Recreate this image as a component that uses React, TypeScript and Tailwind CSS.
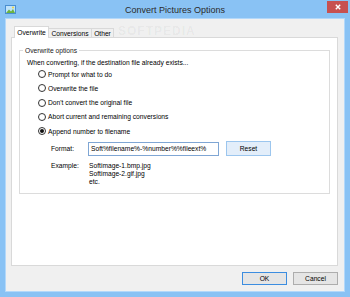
import React from 'react';

const Radio: React.FC<{ checked?: boolean; label: string }> = ({ checked, label }) => (
  <div className="flex items-center h-[14.25px] ml-[11px] gap-[2px]">
    <span className="w-[8px] h-[8px] rounded-full border border-[#333] bg-white flex items-center justify-center">
      {checked && <span className="w-[4px] h-[4px] rounded-full bg-[#111]" />}
    </span>
    <span>{label}</span>
  </div>
);

const App: React.FC = () => {
  return (
    <div
      className="w-[350px] h-[297px] bg-[#89c2f4] flex flex-col text-[6.7px] leading-[9px] text-black overflow-hidden"
      style={{ fontFamily: '"Liberation Sans", Arial, sans-serif' }}
    >
      {/* Title bar */}
      <div className="relative h-[18px] flex items-center justify-center shrink-0">
        <svg className="absolute left-[5px] top-[5px]" width="11" height="9" viewBox="0 0 11 9">
          <rect x="0.5" y="0.5" width="10" height="8" fill="#bfe3fb" stroke="#4a8fd0" />
          <path d="M1 8 L4 4.5 L6 6.5 L8 4 L10 8 Z" fill="#6cb33f" />
          <circle cx="8" cy="2.5" r="1" fill="#f2d33a" />
        </svg>
        <span className="text-[9px] leading-[10px] text-[#2b2b2b] mt-[2px]">Convert Pictures Options</span>
        <div className="absolute right-[2px] top-[1px] w-[21px] h-[12px] bg-[#c75050] flex items-center justify-center">
          <svg width="6" height="6" viewBox="0 0 6 6">
            <path d="M0.8 0.8 L5.2 5.2 M5.2 0.8 L0.8 5.2" stroke="#fff" strokeWidth="1.4" />
          </svg>
        </div>
      </div>

      {/* Client area */}
      <div className="relative flex-1 mx-[5px] mb-[5px] bg-[#f0f0f0] border border-[#b3d8fa] flex flex-col pl-[5px] pr-[6px]">
        <span className="absolute left-[112px] top-[6px] text-[12px] leading-[13px] font-bold tracking-[1px] text-[#000]/[0.05] pointer-events-none">
          SOFTPEDIA
        </span>

        {/* Tabs */}
        <div className="flex items-end mt-[7px] pl-[3px] -mb-px relative z-10 h-[12px]">
          <div className="h-[12px] w-[35px] bg-white border border-[#d9d9d9] border-b-0 flex items-center justify-center">
            Overwrite
          </div>
          <div className="h-[9px] w-[43px] mb-px bg-[#f0f0f0] border border-[#d9d9d9] border-l-0 border-b-0 flex items-center justify-center">
            Conversions
          </div>
          <div className="h-[9px] w-[22px] mb-px bg-[#f0f0f0] border border-[#d9d9d9] border-l-0 border-b-0 flex items-center justify-center">
            Other
          </div>
        </div>

        {/* Tab panel */}
        <div className="h-[229px] bg-white border border-[#d9d9d9] px-[7px] pt-[12px]">
          <div className="relative h-[144px] border border-[#dcdcdc] pl-[7px] pt-[7px]">
            <span className="absolute left-[3px] -top-[5px] bg-white px-[2px] text-[#1a1a1a]">Overwrite options</span>
            <div>When converting, if the destination file already exists...</div>
            <Radio label="Prompt for what to do" />
            <Radio label="Overwrite the file" />
            <Radio label="Don't convert the original file" />
            <Radio label="Abort current and remaining conversions" />
            <Radio checked label="Append number to filename" />

            <div className="flex items-center mt-[3px] h-[15px] ml-[24px]">
              <span className="w-[37px]">Format:</span>
              <div className="w-[131px] h-[14px] border border-[#7fa6d4] bg-white flex items-center pl-[2px] overflow-hidden whitespace-nowrap">
                Soft%filename%-%number%%fileext%
              </div>
              <div className="ml-[7px] w-[45px] h-[15px] border border-[#9cc6ee] bg-[#e3eefa] flex items-center justify-center">
                Reset
              </div>
            </div>

            <div className="flex mt-[6px] ml-[24px] leading-[8px]">
              <span className="w-[38px]">Example:</span>
              <div className="flex flex-col">
                <span>Softimage-1.bmp.jpg</span>
                <span>Softimage-2.gif.jpg</span>
                <span>etc.</span>
              </div>
            </div>
          </div>
        </div>

        {/* Buttons */}
        <div className="flex justify-end gap-[6px] mt-[6px]">
          <div className="w-[45px] h-[13px] border border-[#3c8de0] bg-[#e5e5e5] flex items-center justify-center">
            OK
          </div>
          <div className="w-[45px] h-[13px] border border-[#adadad] bg-[#e5e5e5] flex items-center justify-center">
            Cancel
          </div>
        </div>
      </div>
    </div>
  );
};

export default App;
